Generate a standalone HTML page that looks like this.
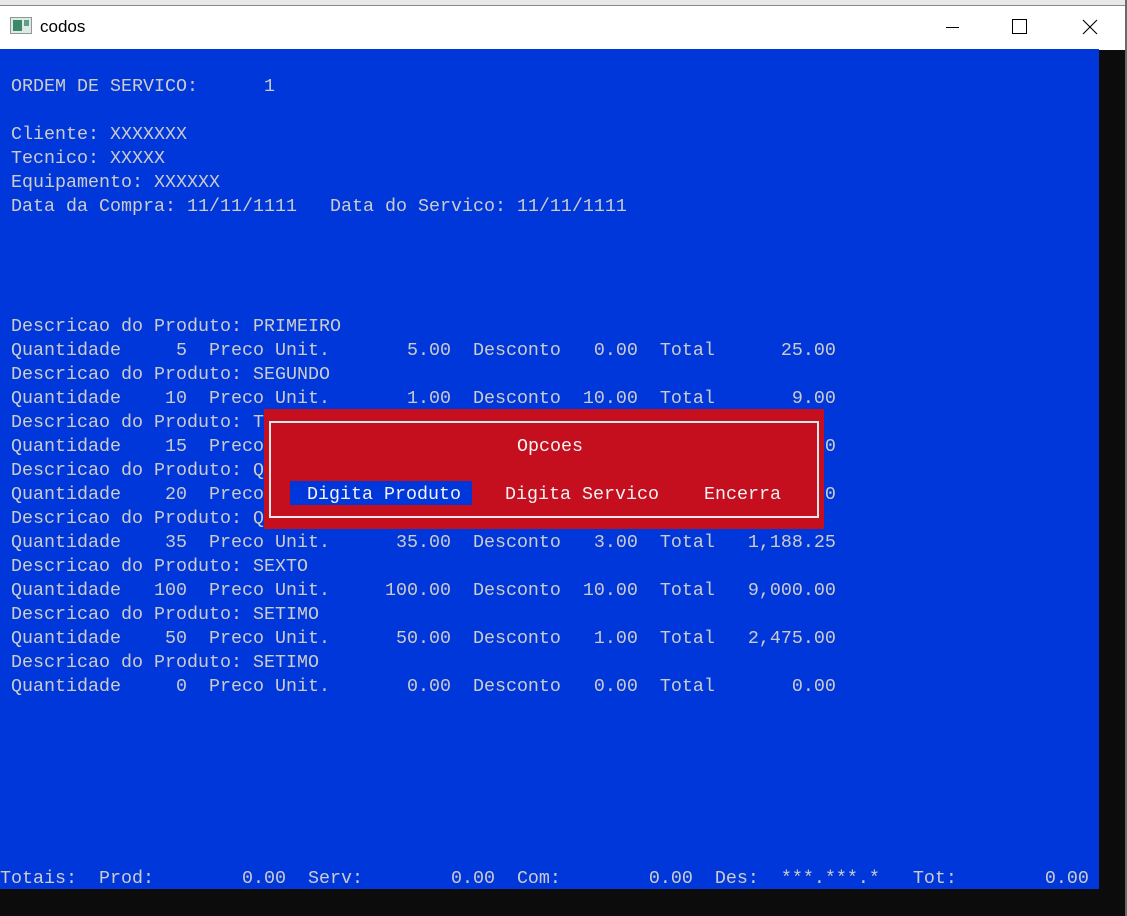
<!DOCTYPE html>
<html><head><meta charset="utf-8"><style>
body{margin:0;width:1127px;height:916px;overflow:hidden;background:#0c0c0c;position:relative;font-family:"Liberation Mono",monospace}
.top{position:absolute;left:0;top:0;width:1127px;height:5px;background:#e8e8e8}
.title{position:absolute;left:0;top:5px;width:1125px;height:44px;background:#fff;border-top:1px solid #888}
.rb{position:absolute;left:1125px;top:0;width:2px;height:916px;background:#6a6a6a}
.ttl{position:absolute;left:40px;top:11px;font:17px "Liberation Sans",sans-serif;color:#000}
.con{position:absolute;left:0;top:49px;width:1099px;height:840px;background:#0037da}
pre{margin:0;position:absolute;left:0;top:51px;font:18.33px/24px "Liberation Mono",monospace;color:#cccccc;white-space:pre}
.dlg{position:absolute;left:264px;top:409px;width:560px;height:120px;background:#c50f1f}
.brd{position:absolute;left:5px;top:12px;width:546px;height:93px;border:2px solid #e8e8e8}
.t{position:absolute;font:18.33px/24px "Liberation Mono",monospace;color:#f2f2f2;white-space:pre}
.hl{position:absolute;left:26px;top:72px;width:182px;height:24px;background:#0037da}
</style></head><body>
<div class="top"></div>
<div class="title">
<svg style="position:absolute;left:10px;top:11px" width="23" height="18"><rect x="0.5" y="0.5" width="21" height="16" fill="#dfe8e4" stroke="#8a9a94"/><rect x="3" y="3" width="9" height="11" fill="#3a8a6a"/><rect x="14" y="3" width="5" height="6" fill="#5aa08a"/></svg>
<div class="ttl">codos</div>
<div style="position:absolute;left:946px;top:21px;width:13px;height:1px;background:#000"></div>
<div style="position:absolute;left:1012px;top:13px;width:13px;height:13px;border:1px solid #000"></div>
<svg style="position:absolute;left:1082px;top:13px" width="16" height="16"><path d="M1 1L15 15M15 1L1 15" stroke="#000" stroke-width="1.1"/></svg>
</div>
<div class="rb"></div>
<div class="con"></div>
<pre>

 ORDEM DE SERVICO:      1

 Cliente: XXXXXXX
 Tecnico: XXXXX
 Equipamento: XXXXXX
 Data da Compra: 11/11/1111   Data do Servico: 11/11/1111




 Descricao do Produto: PRIMEIRO
 Quantidade     5  Preco Unit.       5.00  Desconto   0.00  Total      25.00
 Descricao do Produto: SEGUNDO
 Quantidade    10  Preco Unit.       1.00  Desconto  10.00  Total       9.00
 Descricao do Produto: TERCEIRO
 Quantidade    15  Preco Unit.      15.00  Desconto   0.00  Total     225.00
 Descricao do Produto: QUARTO
 Quantidade    20  Preco Unit.      20.00  Desconto   0.00  Total     400.00
 Descricao do Produto: QUINTO
 Quantidade    35  Preco Unit.      35.00  Desconto   3.00  Total   1,188.25
 Descricao do Produto: SEXTO
 Quantidade   100  Preco Unit.     100.00  Desconto  10.00  Total   9,000.00
 Descricao do Produto: SETIMO
 Quantidade    50  Preco Unit.      50.00  Desconto   1.00  Total   2,475.00
 Descricao do Produto: SETIMO
 Quantidade     0  Preco Unit.       0.00  Desconto   0.00  Total       0.00







Totais:  Prod:        0.00  Serv:        0.00  Com:        0.00  Des:  ***.***.*   Tot:        0.00</pre>
<div class="dlg">
<div class="brd"></div>
<div class="hl"></div>
<div class="t" style="left:253px;top:26px">Opcoes</div>
<div class="t" style="left:43px;top:74px">Digita Produto</div>
<div class="t" style="left:241px;top:74px">Digita Servico</div>
<div class="t" style="left:440px;top:74px">Encerra</div>
</div>
</body></html>
